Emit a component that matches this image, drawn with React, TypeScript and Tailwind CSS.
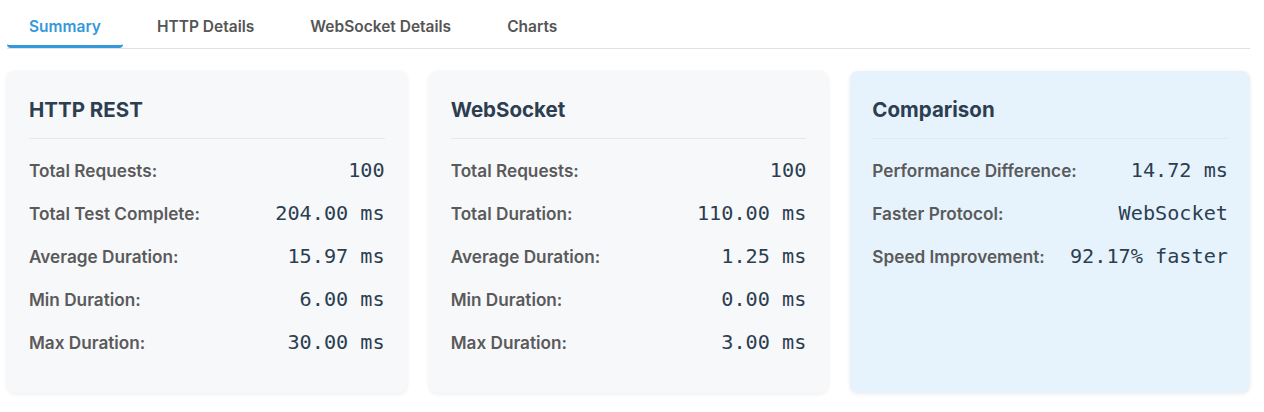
import React from "react";

type Row = { label: string; value: string };

const http: Row[] = [
  { label: "Total Requests:", value: "100" },
  { label: "Total Test Complete:", value: "204.00 ms" },
  { label: "Average Duration:", value: "15.97 ms" },
  { label: "Min Duration:", value: "6.00 ms" },
  { label: "Max Duration:", value: "30.00 ms" },
];

const ws: Row[] = [
  { label: "Total Requests:", value: "100" },
  { label: "Total Duration:", value: "110.00 ms" },
  { label: "Average Duration:", value: "1.25 ms" },
  { label: "Min Duration:", value: "0.00 ms" },
  { label: "Max Duration:", value: "3.00 ms" },
];

const cmp: Row[] = [
  { label: "Performance Difference:", value: "14.72 ms" },
  { label: "Faster Protocol:", value: "WebSocket" },
  { label: "Speed Improvement:", value: "92.17% faster" },
];

function Card({ title, rows, highlight }: { title: string; rows: Row[]; highlight?: boolean }) {
  return (
    <div
      className={`rounded-[8px] px-[22px] pt-[25px] pb-[29px] shadow-[0_1px_4px_rgba(0,0,0,0.08)] ${
        highlight ? "bg-[#e6f3fd]" : "bg-[#f7f8fa]"
      }`}
    >
      <h3 className="text-[20.5px] leading-[28px] font-bold text-[#2c3e50] pb-[14px] border-b border-[#e6e8eb]">
        {title}
      </h3>
      <div className="mt-[10px] flex flex-col">
        {rows.map((r) => (
          <div key={r.label} className="h-[43px] flex items-center justify-between">
            <span className="text-[17.2px] font-semibold text-[#5a5a5a]">{r.label}</span>
            <span
              className="text-[20.2px] text-[#2c3e50]"
              style={{ fontFamily: '"DejaVu Sans Mono", "Liberation Mono", monospace' }}
            >
              {r.value}
            </span>
          </div>
        ))}
      </div>
    </div>
  );
}

export default function App() {
  const tabs = ["Summary", "HTTP Details", "WebSocket Details", "Charts"];
  return (
    <div className="bg-white w-[1264px] h-[412px]" style={{ fontFamily: 'Inter, "Noto Sans", sans-serif' }}>
      <div className="ml-[7px] w-[1243px]">
        <div className="flex gap-[12px] border-b border-[#dfe1e4]">
          {tabs.map((t, i) => (
            <button
              key={t}
              className={`px-[22px] pt-[15px] pb-[6px] text-[15.5px] leading-[24px] font-semibold rounded-[4px] border-b-[3px] ${
                i === 0 ? "text-[#3498db] border-[#3498db]" : "text-[#555] border-transparent"
              }`}
            >
              {t}
            </button>
          ))}
        </div>
        <div className="mt-[22px] grid grid-cols-3 gap-[22px]">
          <Card title="HTTP REST" rows={http} />
          <Card title="WebSocket" rows={ws} />
          <Card title="Comparison" rows={cmp} highlight />
        </div>
      </div>
    </div>
  );
}
